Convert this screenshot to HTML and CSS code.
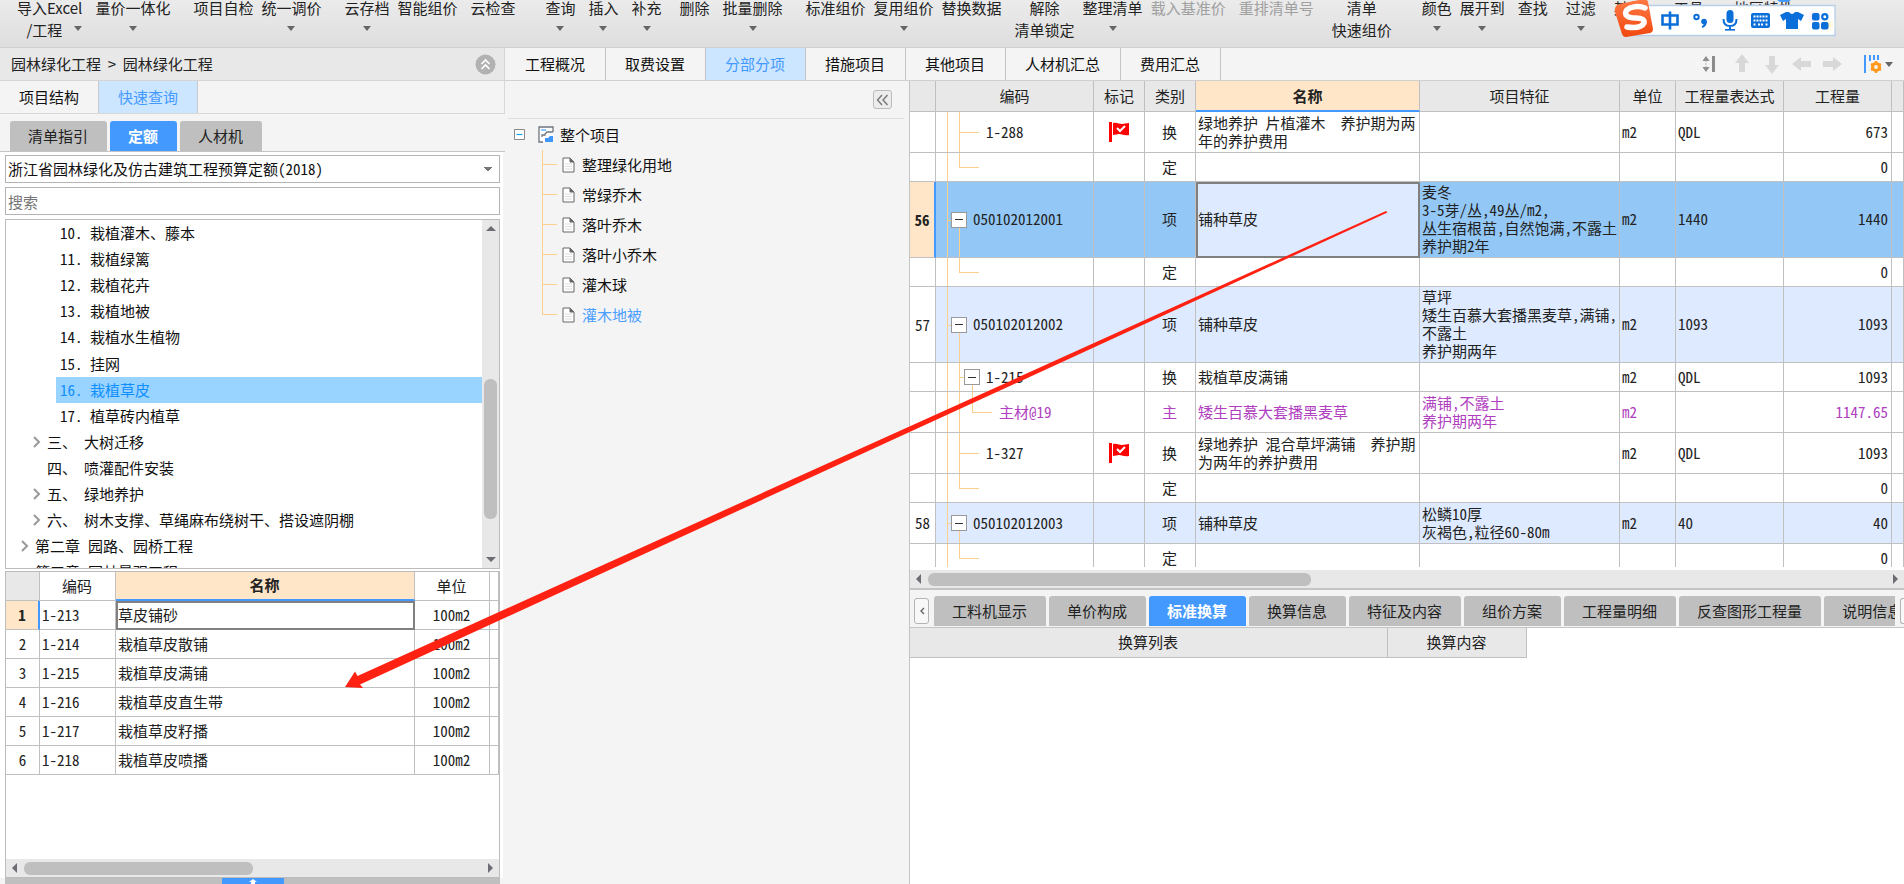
FILE: index.html
```html
<!DOCTYPE html>
<html lang="zh-CN">
<head>
<meta charset="utf-8">
<title>园林绿化工程</title>
<link rel="stylesheet" href="styles.css">
</head>
<body>
<header class="toolbar">
  <button class="tool"><span>导入Excel</span><span class="tool-second">/工程<i class="caret"></i></span></button>
  <button class="tool gap-m"><span>量价一体化</span><i class="caret"></i></button>
  <button class="tool gap-l"><span>项目自检</span></button>
  <button class="tool"><span>统一调价</span><i class="caret"></i></button>
  <button class="tool gap-l"><span>云存档</span><i class="caret"></i></button>
  <button class="tool"><span>智能组价</span></button>
  <button class="tool gap-m"><span>云检查</span></button>
  <button class="tool gap-xl"><span>查询</span><i class="caret"></i></button>
  <button class="tool gap-m"><span>插入</span><i class="caret"></i></button>
  <button class="tool gap-m"><span>补充</span><i class="caret"></i></button>
  <button class="tool gap-n"><span>删除</span></button>
  <button class="tool gap-m"><span>批量删除</span><i class="caret"></i></button>
  <button class="tool gap-l"><span>标准组价</span></button>
  <button class="tool"><span>复用组价</span><i class="caret"></i></button>
  <button class="tool"><span>替换数据</span></button>
  <button class="tool gap-m"><span>解除</span><span>清单锁定</span></button>
  <button class="tool"><span>整理清单</span><i class="caret"></i></button>
  <button class="tool" disabled><span>载入基准价</span></button>
  <button class="tool gap-m" disabled><span>重排清单号</span></button>
  <button class="tool gap-n"><span>清单</span><span>快速组价</span></button>
  <button class="tool gap-xl"><span>颜色</span><i class="caret"></i></button>
  <button class="tool"><span>展开到</span><i class="caret"></i></button>
  <button class="tool gap-m"><span>查找</span></button>
  <button class="tool gap-n"><span>过滤</span><i class="caret"></i></button>
  <button class="tool gap-n"><span>其他</span></button>
  <button class="tool gap-xl"><span>工具</span></button>
  <button class="tool gap-xl"><span>地区特性</span></button>
</header>

<main class="workspace">
  <aside class="side">
    <div class="crumbs">
      <span>园林绿化工程 &nbsp;&gt;&nbsp; 园林绿化工程</span>
      <button class="icon-btn" aria-label="收起"><svg width="21" height="21" viewBox="0 0 21 21"><circle cx="10.500" cy="10.500" r="10" fill="#b2b2b2"/><path d="M6.500 10l4-4 4 4M6.500 15l4-4 4 4" fill="none" stroke="#fff" stroke-width="1.600"/></svg></button>
    </div>
    <nav class="side-tabs">
      <button class="side-tab">项目结构</button>
      <button class="side-tab on">快速查询</button>
    </nav>
    <nav class="chips side-chips">
      <button class="chip">清单指引</button>
      <button class="chip on">定额</button>
      <button class="chip">人材机</button>
    </nav>
    <div class="side-body">
      <select class="field" aria-label="定额库"><option>浙江省园林绿化及仿古建筑工程预算定额(2018)</option></select>
      <input class="field" type="text" placeholder="搜索" aria-label="搜索">
      <div class="chapters">
        <ul class="chapter-list">
          <li class="deep"><span class="no">10.</span>栽植灌木、藤本</li>
          <li class="deep"><span class="no">11.</span>栽植绿篱</li>
          <li class="deep"><span class="no">12.</span>栽植花卉</li>
          <li class="deep"><span class="no">13.</span>栽植地被</li>
          <li class="deep"><span class="no">14.</span>栽植水生植物</li>
          <li class="deep"><span class="no">15.</span>挂网</li>
          <li class="deep on"><span class="no">16.</span>栽植草皮</li>
          <li class="deep"><span class="no">17.</span>植草砖内植草</li>
          <li class="mid"><svg class="chev" viewBox="0 0 8 12"><path d="M1 1l5 5-5 5"/></svg><span class="sec">三、</span>大树迁移</li>
          <li class="mid"><svg class="chev" viewBox="0 0 8 12"></svg><span class="sec">四、</span>喷灌配件安装</li>
          <li class="mid"><svg class="chev" viewBox="0 0 8 12"><path d="M1 1l5 5-5 5"/></svg><span class="sec">五、</span>绿地养护</li>
          <li class="mid"><svg class="chev" viewBox="0 0 8 12"><path d="M1 1l5 5-5 5"/></svg><span class="sec">六、</span>树木支撑、草绳麻布绕树干、搭设遮阴棚</li>
          <li class="top"><svg class="chev" viewBox="0 0 8 12"><path d="M1 1l5 5-5 5"/></svg><span class="chap">第二章</span>园路、园桥工程</li>
          <li class="top"><svg class="chev" viewBox="0 0 8 12"></svg><span class="chap">第三章</span>园林景观工程</li>
        </ul>
        <div class="vscroll"><i class="tri up"></i><div class="vtrack"><i class="vthumb"></i></div><i class="tri down"></i></div>
      </div>
      <div class="quota">
        <table class="grid quota-grid">
          <colgroup><col class="q-no"><col class="q-code"><col><col class="q-unit"><col class="q-end"></colgroup>
          <thead><tr><th class="shade"></th><th>编码</th><th class="current">名称</th><th>单位</th><th></th></tr></thead>
          <tbody>
            <tr><th class="current-row">1</th><td>1-213</td><td class="focus">草皮铺砂</td><td class="mid-text">100m2</td><td></td></tr>
            <tr><th>2</th><td>1-214</td><td>栽植草皮散铺</td><td class="mid-text">100m2</td><td></td></tr>
            <tr><th>3</th><td>1-215</td><td>栽植草皮满铺</td><td class="mid-text">100m2</td><td></td></tr>
            <tr><th>4</th><td>1-216</td><td>栽植草皮直生带</td><td class="mid-text">100m2</td><td></td></tr>
            <tr><th>5</th><td>1-217</td><td>栽植草皮籽播</td><td class="mid-text">100m2</td><td></td></tr>
            <tr><th>6</th><td>1-218</td><td>栽植草皮喷播</td><td class="mid-text">100m2</td><td></td></tr>
          </tbody>
        </table>
        <div class="hscroll"><i class="tri left"></i><div class="htrack"><i class="hthumb half"></i></div><i class="tri right"></i></div>
      </div>
    </div>
    <div class="side-foot"><button class="pull" aria-label="展开"><svg width="10" height="5" viewBox="0 0 10 5"><path d="M5 0l4 3H7v2H3V3H1z" fill="#fff"/></svg></button></div>
  </aside>

  <section class="content">
    <nav class="page-tabs">
      <button class="page-tab">工程概况</button>
      <button class="page-tab">取费设置</button>
      <button class="page-tab on">分部分项</button>
      <button class="page-tab">措施项目</button>
      <button class="page-tab">其他项目</button>
      <button class="page-tab">人材机汇总</button>
      <button class="page-tab">费用汇总</button>
      <div class="page-tools">
        <svg width="14" height="18" viewBox="0 0 14 18"><path d="M4 1l3.500 5h-7zM4 17l3.500-5h-7z" fill="#8c8c8c"/><path d="M4 5v8" stroke="#aaa" stroke-dasharray="2 1"/><path d="M10 1h3v16h-3z" fill="#8c8c8c"/></svg>
        <svg class="arrow" width="20" height="20" viewBox="0 0 20 20"><path d="M10 0l7 9h-4v9H7V9H3z"/></svg>
        <svg class="arrow" width="20" height="20" viewBox="0 0 20 20"><path d="M10 20l7-9h-4V2H7v9H3z"/></svg>
        <svg class="arrow" width="20" height="20" viewBox="0 0 20 20"><path d="M0 10l9-7v4h10v6H9v4z"/></svg>
        <svg class="arrow" width="20" height="20" viewBox="0 0 20 20"><path d="M20 10l-9-7v4H1v6h10v4z"/></svg>
        <span class="column-set"><svg width="19" height="20" viewBox="0 0 19 20"><path d="M0 1h2v18H0zM5 1h2v6H5zM9 1h2v5H9zM13 1h2v5h-2z" fill="#4499ff"/><circle cx="12" cy="13" r="3.500" fill="none" stroke="#ff9a1f" stroke-width="3.200"/><path d="M12 7v3M12 16v3M7 10l2 1M17 10l-2 1M7 16l2-1M17 16l-2-1" stroke="#ff9a1f" stroke-width="2.400"/></svg><i class="caret"></i></span>
      </div>
    </nav>

    <div class="panes">
      <section class="outline">
        <div class="outline-head"><button class="fold" aria-label="折叠"><svg width="13" height="12" viewBox="0 0 13 12"><path d="M6 1L1.500 6 6 11M11.500 1L7 6l4.500 5" fill="none" stroke="#777" stroke-width="1.400"/></svg></button></div>
        <div class="root">
          <svg width="11" height="11" viewBox="0 0 11 11"><path d="M.5.500h10v10H.5z" fill="#fff" stroke="#888"/><path d="M2.500 5.500h6" stroke="#1aa0e8" stroke-width="1.200"/></svg>
          <svg width="16" height="17" viewBox="0 0 16 17"><path d="M1 1h14v15H1z" fill="#fff"/><path d="M3 3h5v2H3z" fill="#8cc4ff"/><path d="M7 16v-4h3l2-2h3v6z" fill="#3f96ff"/><path d="M15 6V1H1v15h4M4 11v-2h3V8l2-2h6" fill="none" stroke="#6e7680" stroke-width="1.300"/></svg>
          <span>整个项目</span>
        </div>
        <ul class="leaves">
          <li><svg class="doc" viewBox="0 0 13 16"><path d="M1 1h7l4 4v10H1z"/><path class="ear" d="M8 1v4h4z"/><path class="rule" d="M3 7h7M3 9.500h7M3 12h7"/></svg>整理绿化用地</li>
          <li><svg class="doc" viewBox="0 0 13 16"><path d="M1 1h7l4 4v10H1z"/><path class="ear" d="M8 1v4h4z"/><path class="rule" d="M3 7h7M3 9.500h7M3 12h7"/></svg>常绿乔木</li>
          <li><svg class="doc" viewBox="0 0 13 16"><path d="M1 1h7l4 4v10H1z"/><path class="ear" d="M8 1v4h4z"/><path class="rule" d="M3 7h7M3 9.500h7M3 12h7"/></svg>落叶乔木</li>
          <li><svg class="doc" viewBox="0 0 13 16"><path d="M1 1h7l4 4v10H1z"/><path class="ear" d="M8 1v4h4z"/><path class="rule" d="M3 7h7M3 9.500h7M3 12h7"/></svg>落叶小乔木</li>
          <li><svg class="doc" viewBox="0 0 13 16"><path d="M1 1h7l4 4v10H1z"/><path class="ear" d="M8 1v4h4z"/><path class="rule" d="M3 7h7M3 9.500h7M3 12h7"/></svg>灌木球</li>
          <li class="on"><svg class="doc" viewBox="0 0 13 16"><path d="M1 1h7l4 4v10H1z"/><path class="ear" d="M8 1v4h4z"/><path class="rule" d="M3 7h7M3 9.500h7M3 12h7"/></svg>灌木地被</li>
        </ul>
      </section>

      <section class="bill">
        <div class="bill-top">
          <div class="bill-view">
          <table class="grid bill-grid">
            <colgroup><col class="b-no"><col class="b-code"><col class="b-mark"><col class="b-kind"><col class="b-name"><col><col class="b-unit"><col class="b-expr"><col class="b-qty"><col class="b-end"></colgroup>
            <thead><tr><th></th><th>编码</th><th>标记</th><th>类别</th><th class="current">名称</th><th>项目特征</th><th>单位</th><th>工程量表达式</th><th>工程量</th><th></th></tr></thead>
            <tbody>
              <tr class="r2"><th></th><td class="code c2"><i class="v l1"></i><i class="v l2"></i><i class="h l2"></i>1-288</td><td class="mid-text"><svg class="flag" viewBox="0 0 20 20"><path d="M0 0h3v20H0z"/><path d="M4 1c4-1 6 1 9 1l7-1v12c-5 1-6-1-10-1l-6 1z"/><path class="tick" d="M8 6l3 3 5-5"/></svg></td><td class="mid-text">换</td><td>绿地养护 片植灌木&nbsp; 养护期为两<br>年的养护费用</td><td></td><td>m2</td><td>QDL</td><td class="num">673</td><td></td></tr>
              <tr class="r1"><th></th><td class="code"><i class="v l1"></i><i class="v l2 upper"></i><i class="h l2"></i></td><td></td><td class="mid-text">定</td><td></td><td></td><td></td><td></td><td class="num">0</td><td></td></tr>
              <tr class="r4 selected"><th class="current-row">56</th><td class="code c1"><i class="v l1"></i><i class="h l1"></i><i class="v l2 lower"></i><button class="toggle t1" aria-label="折叠"></button>050102012001</td><td></td><td class="mid-text">项</td><td class="focus">铺种草皮</td><td>麦冬<br>3-5芽/丛,49丛/m2,<br>丛生宿根苗,自然饱满,不露土<br>养护期2年</td><td>m2</td><td>1440</td><td class="num">1440</td><td></td></tr>
              <tr class="r1"><th></th><td class="code"><i class="v l1"></i><i class="v l2 upper"></i><i class="h l2"></i></td><td></td><td class="mid-text">定</td><td></td><td></td><td></td><td></td><td class="num">0</td><td></td></tr>
              <tr class="r4 item"><th>57</th><td class="code c1"><i class="v l1"></i><i class="h l1"></i><i class="v l2 lower"></i><button class="toggle t1" aria-label="折叠"></button>050102012002</td><td></td><td class="mid-text">项</td><td>铺种草皮</td><td>草坪<br>矮生百慕大套播黑麦草,满铺,<br>不露土<br>养护期两年</td><td>m2</td><td>1093</td><td class="num">1093</td><td></td></tr>
              <tr class="r1"><th></th><td class="code c2"><i class="v l1"></i><i class="v l2"></i><i class="h l2"></i><i class="v l3 lower"></i><button class="toggle t2" aria-label="折叠"></button>1-215</td><td></td><td class="mid-text">换</td><td>栽植草皮满铺</td><td></td><td>m2</td><td>QDL</td><td class="num">1093</td><td></td></tr>
              <tr class="r2 material"><th></th><td class="code c3"><i class="v l1"></i><i class="v l2"></i><i class="v l3 upper"></i><i class="h l3"></i>主材@19</td><td></td><td class="mid-text">主</td><td>矮生百慕大套播黑麦草</td><td>满铺,不露土<br>养护期两年</td><td>m2</td><td></td><td class="num">1147.65</td><td></td></tr>
              <tr class="r2"><th></th><td class="code c2"><i class="v l1"></i><i class="v l2"></i><i class="h l2"></i>1-327</td><td class="mid-text"><svg class="flag" viewBox="0 0 20 20"><path d="M0 0h3v20H0z"/><path d="M4 1c4-1 6 1 9 1l7-1v12c-5 1-6-1-10-1l-6 1z"/><path class="tick" d="M8 6l3 3 5-5"/></svg></td><td class="mid-text">换</td><td>绿地养护 混合草坪满铺&nbsp; 养护期<br>为两年的养护费用</td><td></td><td>m2</td><td>QDL</td><td class="num">1093</td><td></td></tr>
              <tr class="r1"><th></th><td class="code"><i class="v l1"></i><i class="v l2 upper"></i><i class="h l2"></i></td><td></td><td class="mid-text">定</td><td></td><td></td><td></td><td></td><td class="num">0</td><td></td></tr>
              <tr class="r2 item"><th>58</th><td class="code c1"><i class="v l1"></i><i class="h l1"></i><i class="v l2 lower"></i><button class="toggle t1" aria-label="折叠"></button>050102012003</td><td></td><td class="mid-text">项</td><td>铺种草皮</td><td>松鳞10厚<br>灰褐色,粒径60-80m</td><td>m2</td><td>40</td><td class="num">40</td><td></td></tr>
              <tr class="r1"><th></th><td class="code"><i class="v l1"></i><i class="v l2 upper"></i><i class="h l2"></i></td><td></td><td class="mid-text">定</td><td></td><td></td><td></td><td></td><td class="num">0</td><td></td></tr>
            </tbody>
          </table>
          </div>
          <div class="hscroll"><i class="tri left"></i><div class="htrack"><i class="hthumb third"></i></div><i class="tri right"></i></div>
        </div>
        <div class="bill-bottom">
          <div class="detail-bar">
            <button class="step" aria-label="向左"><svg width="6" height="8" viewBox="0 0 6 8"><path d="M5 1L2 4l3 3" fill="none" stroke="#666" stroke-width="1.400"/></svg></button>
            <nav class="chips detail-chips">
              <button class="chip">工料机显示</button>
              <button class="chip">单价构成</button>
              <button class="chip on">标准换算</button>
              <button class="chip">换算信息</button>
              <button class="chip">特征及内容</button>
              <button class="chip">组价方案</button>
              <button class="chip">工程量明细</button>
              <button class="chip">反查图形工程量</button>
              <button class="chip">说明信息</button>
            </nav>
            <button class="step last" aria-label="向右"></button>
          </div>
          <table class="grid convert">
            <thead><tr><th class="cv-list">换算列表</th><th class="cv-text">换算内容</th></tr></thead>
          </table>
        </div>
      </section>
    </div>
  </section>
</main>

<div class="ime">
  <svg width="224" height="38" viewBox="0 0 224 38">
    <defs><linearGradient id="o" x1="0" y1="0" x2="0" y2="1"><stop offset="0" stop-color="#ff7a45"/><stop offset="1" stop-color="#f2480f"/></linearGradient>
    <radialGradient id="p"><stop offset="0" stop-color="#eedcff"/><stop offset="1" stop-color="#fff" stop-opacity="0"/></radialGradient>
    <radialGradient id="y"><stop offset="0" stop-color="#ffeeb0"/><stop offset="1" stop-color="#fff" stop-opacity="0"/></radialGradient></defs>
    <path d="M163 0h14l-3 2h-8z" fill="#4499ff"/>
    <path d="M12 5.500h209v30H12z" fill="#fff" stroke="#b9cfe9" stroke-width="1.400"/>
    <circle cx="200" cy="17" r="11" fill="url(#p)"/><circle cx="214" cy="25" r="9" fill="url(#y)"/>
    <path d="M5 4L30-1q3 0 4 3l5 27q0 3-3 4l-24 4q-3 0-4-3L1 12q-1-6 4-8z" fill="url(#o)"/>
    <path d="M31 8Q24 5 16 8q-6 3-4 7 2 3 10 3 9 0 8 5-3 6-17 4" fill="none" stroke="#fff" stroke-width="5.500" stroke-linecap="round"/>
    <g fill="none" stroke="#0a6fd8" stroke-width="2.600"><path d="M48.500 15.500h15v9h-15zM56 11.500v18"/><circle cx="82.500" cy="17" r="2.200" stroke-width="2"/><path d="M109.500 19q0 7 6.500 7t6.500-7M116 26v4" stroke-width="2"/></g>
    <g fill="#0a6fd8"><circle cx="90" cy="21.500" r="2.800"/><path d="M92.800 21q.5 5-4.300 7l-.8-1.500q2.300-1.500 2.300-4z"/><rect x="112.500" y="10" width="7" height="13" rx="3.500"/><path d="M111 29h10v1.600h-10z"/><rect x="137" y="13" width="19" height="15" rx="2"/><path d="M172 12l-6 3 3 6 3-2v10h12V19l3 2 3-6-6-3h-3q-3 4-6 0z"/><rect x="198" y="13" width="7.500" height="7.500" rx="2"/><rect x="198" y="22" width="7.500" height="7.500" rx="2"/><rect x="207" y="22" width="7.500" height="7.500" rx="2"/></g>
    <circle cx="210.800" cy="16.800" r="2.600" fill="none" stroke="#0a6fd8" stroke-width="2.200"/>
    <path d="M139.500 16.500h14M139.500 20.500h14M139.500 24.500h2.500M144 24.500h6M151.500 24.500h2" stroke="#fff" stroke-width="2" stroke-dasharray="2 1"/>
  </svg>
</div>
<svg class="pointer" width="1045" height="480" viewBox="0 0 1045 480"><path d="M1 478L11 462.500L13.500 467L1042 2L1043.500 3.500L16 475.500L19 479z" fill="#ff2213"/></svg>
</body>
</html>
```

FILE: styles.css
```css
* { box-sizing: border-box; }
body {
  margin: 0;
  height: 100vh;
  display: flex;
  flex-direction: column;
  overflow: hidden;
  position: relative;
  background: #f4f4f4;
  color: #222;
  font: 15px/18px "Noto Sans Mono CJK SC", "Noto Sans CJK SC", sans-serif;
}
button { font: inherit; color: inherit; border: 0; padding: 0; background: none; white-space: nowrap; }
ul { list-style: none; margin: 0; padding: 0; }
i { display: block; font-style: normal; }

/* toolbar */
.toolbar {
  flex: none;
  height: 48px;
  display: flex;
  align-items: flex-start;
  gap: 8px;
  padding-left: 17px;
  overflow: hidden;
  background: linear-gradient(#ebebeb, #dedede);
  border-bottom: 1px solid #cfcfcf;
  font-family: "Noto Sans CJK SC", sans-serif;
}
.tool { flex: none; margin-top: -3px; display: flex; flex-direction: column; align-items: center; line-height: 22px; }
.tool:disabled { color: #a0a0a0; }
.tool .caret { margin-top: 7px; }
.tool-second { display: flex; align-items: flex-start; align-self: flex-end; gap: 12px; }
.gap-m { margin-left: 5px; }
.gap-n { margin-left: 10px; }
.gap-l { margin-left: 15px; }
.gap-xl { margin-left: 22px; }
.caret { border: 4px solid transparent; border-top: 5px solid #666; border-bottom: 0; }

.workspace { flex: 1; min-height: 0; display: grid; grid-template-columns: 505px minmax(0, 1fr); }

/* left side */
.side { display: flex; flex-direction: column; min-height: 0; }
.crumbs {
  flex: none; height: 33px; display: flex; align-items: center; justify-content: space-between;
  padding: 0 8px 0 11px; background: #e8e8e8; border-bottom: 1px solid #d4d4d4; border-right: 1px solid #d4d4d4;
  font-family: "Noto Sans CJK SC", sans-serif;
}
.icon-btn { display: flex; }
.side-tabs { flex: none; height: 33px; display: flex; border-bottom: 1px solid #d8d8d8; border-right: 1px solid #d8d8d8; }
.side-tab { padding: 0 19px; border-right: 1px solid #c8c8c8; color: #111; }
.side-tab.on { background: #cce6ff; color: #4499ff; }
.chips { display: flex; gap: 3px; }
.chip { flex: none; height: 30px; padding: 0 19px 0 18px; background: #bfbfbf; border-radius: 3px 3px 0 0; color: #222; }
.chip.on { background: #4499ff; color: #fff; font-weight: bold; }
.side-chips { flex: none; padding: 7px 0 0 10px; border-bottom: 1px solid #c4c4c4; }
.side-body { flex: 1; min-height: 0; display: flex; flex-direction: column; gap: 4px; padding: 3px 3px 0 5px; background: #fff; margin-right: 2px; }
.field { flex: none; height: 28px; width: 100%; border: 1px solid #b4b4b4; background: #fff; font: inherit; color: #111; padding: 0 2px; border-radius: 0; outline: 0; }
select.field {
  appearance: none;
  background: linear-gradient(to bottom left, #777 50%, transparent 51%) right 11px center / 4px 4px no-repeat,
    linear-gradient(to bottom right, #777 50%, transparent 51%) right 7px center / 4px 4px no-repeat, #fff;
}
.field::placeholder { color: #757575; opacity: 1; }
.chapters { flex: 0 0 350px; display: flex; overflow: hidden; border: 1px solid #bcbcbc; color: #111; }
.chapter-list { flex: 1; height: 105%; display: flex; flex-direction: column; }
.chapter-list li { flex: 1; display: flex; align-items: center; white-space: nowrap; }
.chapter-list .deep { margin-left: 50px; padding-left: 4px; }
.chapter-list .mid { padding-left: 27px; }
.chapter-list .top { padding-left: 15px; }
.chapter-list .on { background: #99d3ff; color: #0f8fff; }
.no { width: 30px; }
.sec { width: 37px; }
.chap { width: 53px; }
.chev { width: 8px; height: 12px; margin-right: 6px; fill: none; stroke: #999; stroke-width: 2; }
.vscroll { width: 17px; background: #e8e8e8; display: flex; flex-direction: column; align-items: center; padding: 6px 0; }
.vtrack { flex: 1; width: 13px; padding-top: 148px; }
.vthumb { height: 140px; border-radius: 6px; background: #bfbfbf; }
.tri { flex: none; border: 5px solid transparent; }
.tri.up { border-top: 0; border-bottom-color: #6c6c74; }
.tri.down { border-bottom: 0; border-top-color: #6c6c74; }
.tri.left { border-left: 0; border-right-color: #6c6c74; }
.tri.right { border-right: 0; border-left-color: #6c6c74; }
.hscroll { flex: none; height: 18px; display: flex; align-items: center; padding: 0 6px; gap: 7px; background: #e8e8e8; }
.htrack { flex: 1; }
.hthumb { height: 13px; border-radius: 6px; background: #bfbfbf; }
.hthumb.half { width: 50%; }
.hthumb.third { width: 40%; }

/* data grids */
.grid { border-collapse: separate; border-spacing: 0; table-layout: fixed; }
.grid th, .grid td { border: 0 solid #c0c0c0; border-width: 0 1px 1px 0; padding: 0 3px 1px 2px; font-weight: normal; white-space: nowrap; overflow: hidden; text-align: left; }
.grid th { text-align: center; }
.grid th.current { background: #ffe6c8; border-bottom: 2px solid #4499ff; font-weight: bold; }
.grid th.current-row { background: #ffe6c8; border-right: 2px solid #4499ff; font-weight: bold; }
.grid td.focus { outline: 2px solid #808080; outline-offset: -2px; }
.grid td.mid-text { text-align: center; }
.grid td.num { text-align: right; }
.grid tbody th { padding: 0; }

.quota { flex: 1; min-height: 0; display: flex; flex-direction: column; justify-content: space-between; border: 1px solid #bcbcbc; margin-top: -2px; }
.quota-grid { width: 100%; }
.quota-grid tr { height: 29px; }
.quota-grid .shade { background: #e8e8e8; }
.q-no { width: 34px; }
.q-code { width: 76px; }
.q-unit { width: 75px; }
.q-end { width: 9px; }
.side-foot { flex: none; height: 6px; display: flex; justify-content: center; background: #bfbfbf; margin: 0 5px; }
.pull { width: 62px; background: #4499ff; display: flex; justify-content: center; align-items: flex-end; }

/* right side */
.content { display: flex; flex-direction: column; min-height: 0; }
.page-tabs { flex: none; height: 33px; display: flex; border-bottom: 1px solid #d0d0d0; padding-left: 1px; }
.page-tab { padding: 0 20px 0 19px; border-right: 1px solid #c4c4c4; color: #111; }
.page-tab.on { background: #cce6ff; color: #4499ff; }
.page-tools { margin-left: auto; display: flex; align-items: center; gap: 10px; padding-right: 11px; }
.page-tools > :first-child { margin-right: 6px; }
.arrow { fill: #d8d8d8; }
.column-set { display: flex; align-items: center; gap: 2px; margin-left: 12px; }
.panes { flex: 1; min-height: 0; display: grid; grid-template-columns: 404px minmax(0, 1fr); }
.outline { padding: 0 5px 0 3px; color: #111; }
.outline-head { height: 38px; display: flex; justify-content: flex-end; align-items: center; padding: 0 12px 0 0; border-bottom: 1px solid #dedede; }
.fold { width: 19px; height: 19px; display: flex; align-items: center; justify-content: center; border: 1px solid #bbb; border-radius: 3px; background: #ececec; }
.root { height: 31px; display: flex; align-items: center; padding: 0 0 0 6px; }
.root svg + svg { margin: 0 6px 0 13px; }
.leaves li { position: relative; height: 30px; display: flex; align-items: center; gap: 7px; padding-left: 54px; }
.leaves li::before { content: ""; position: absolute; left: 34px; top: 0; height: 30px; border-left: 1px solid #fccf8c; }
.leaves li::after { content: ""; position: absolute; left: 34px; top: 14px; width: 15px; border-top: 1px solid #fccf8c; }
.leaves li:last-child::before { height: 15px; }
.leaves .on { color: #4c9fff; }
.doc { width: 13px; height: 16px; fill: #fff; stroke: #666; }
.doc .ear { fill: #666; }
.doc .rule { stroke: #ddd; }

.bill { display: flex; flex-direction: column; min-height: 0; border-left: 1px solid #c4c4c4; }
.bill-top { flex: 1; min-height: 0; display: flex; flex-direction: column; background: #fff; border-bottom: 2px solid #c4c4c4; }
.bill-view { flex: 1; min-height: 0; overflow: hidden; margin-bottom: 3px; }
.bill-grid { width: 100%; }
.bill-grid thead tr { height: 31px; }
.bill-grid thead th { background: #e8e8e8; padding: 0; }
.bill-grid thead th.current { background: #ffe6c8; }
.r1 { height: 29px; }
.r2 { height: 41px; }
.r4 { height: 76px; }
.b-no { width: 26px; }
.b-code { width: 158px; }
.b-mark { width: 51px; }
.b-kind { width: 51px; }
.b-name { width: 224px; }
.b-unit { width: 56px; }
.b-expr { width: 108px; }
.b-qty { width: 108px; }
.b-end { width: 12px; }
.selected td { background: #93c8f6; }
.item td, .selected td.focus { background: #deeaff; }
.material { color: #b040c0; }
.flag { width: 20px; height: 20px; fill: #f00; vertical-align: middle; }
.flag .tick { fill: none; stroke: #fff; stroke-width: 2; }

/* tree guides inside the code column */
.code { position: relative; }
.grid td.c1 { padding-left: 37px; }
.grid td.c2 { padding-left: 50px; }
.grid td.c3 { padding-left: 63px; }
.v { position: absolute; top: 0; bottom: -1px; border-left: 1px solid #fccf8c; }
.v.upper { bottom: 50%; }
.v.lower { top: 50%; }
.h { position: absolute; top: 50%; width: 20px; border-top: 1px solid #fccf8c; }
.l1 { left: 11px; }
.l2 { left: 23px; }
.l3 { left: 36px; }
.h.l1 { width: 6px; }
.toggle { position: absolute; top: calc(50% - 8px); width: 16px; height: 16px; border: 1px solid #999; background: linear-gradient(#333, #333) center / 8px 1px no-repeat #fff; }
.t1 { left: 15px; }
.t2 { left: 28px; }

.bill-bottom { flex: 0 0 294px; background: #fff; }
.detail-bar { display: flex; align-items: center; height: 38px; padding: 6px 0 2px 4px; background: #f4f4f4; border-bottom: 1px solid #c4c4c4; }
.step { flex: none; width: 15px; height: 26px; display: flex; align-items: center; justify-content: center; border: 1px solid #b4b4b4; border-radius: 3px; background: #f8f8f8; margin-right: 5px; }
.step.last { width: 4px; margin: 0 0 0 5px; border-right: 0; border-radius: 3px 0 0 3px; }
.detail-chips { flex: 1; overflow: hidden; }
.convert th { height: 30px; background: #e8e8e8; }
.cv-list { width: 478px; }
.cv-text { width: 139px; }

/* floating input-method bar and the drawn arrow */
.ime { position: absolute; top: 0; right: 66px; height: 38px; }
.pointer { position: absolute; left: 344px; top: 209px; pointer-events: none; }
```
